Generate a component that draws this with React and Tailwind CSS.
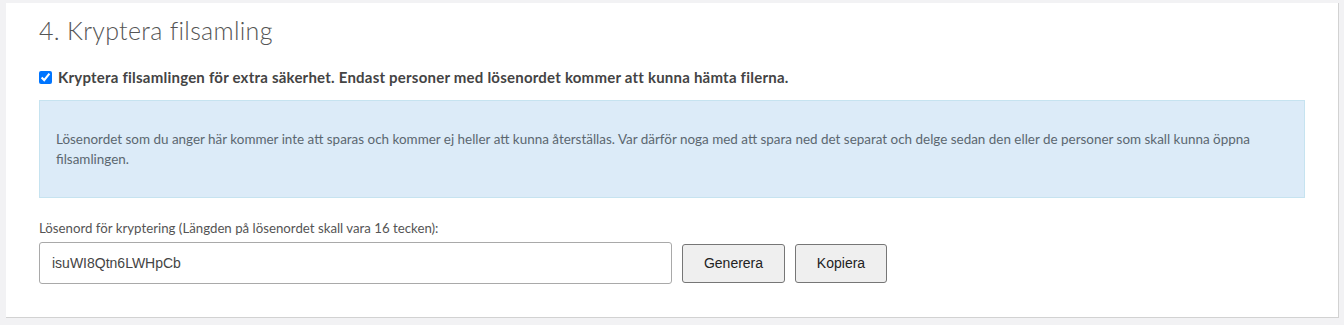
import React, { useState } from 'react';

const InfoBox = () => (
  <div className="mt-[11px] mr-[33px] border border-[#c6e3f0] bg-[#dcebf8] px-[16px] pt-[28px] pb-[28px] text-[13.45px] leading-[20px] text-[#5b6770]">
    Lösenordet som du anger här kommer inte att sparas och kommer ej heller att kunna återställas. Var därför noga med att spara ned det separat och delge sedan den eller de personer som skall kunna öppna filsamlingen.
  </div>
);

const App = () => {
  const [encrypt, setEncrypt] = useState(true);
  const [password, setPassword] = useState('isuWI8Qtn6LWHpCb');

  return (
    <div className="min-h-[325px] bg-[#f2f2f4] pt-[3px] pl-[6px]" style={{ fontFamily: 'Lato, "Noto Sans", sans-serif' }}>
      <div className="h-[315px] w-[1333px] border-r border-b border-[#d2d2d2] bg-white pl-[33px] pt-[12px]">
        <h2 className="text-[25px] font-light leading-[30px] tracking-[0.3px] text-[#555]">4. Kryptera filsamling</h2>

        <label className="mt-[21px] flex items-center gap-[6px] text-[15px] font-bold tracking-[0.22px] text-[#444]">
          <input
            type="checkbox"
            checked={encrypt}
            onChange={(e) => setEncrypt(e.target.checked)}
            className="h-[13px] w-[13px] accent-[#0075ff]"
          />
          Kryptera filsamlingen för extra säkerhet. Endast personer med lösenordet kommer att kunna hämta filerna.
        </label>

        <InfoBox />

        {/* password row */}
        <div className="mt-[21px] text-[13.25px] text-[#555]">
          Lösenord för kryptering (Längden på lösenordet skall vara 16 tecken):
        </div>
        <div className="mt-[4px] flex items-center gap-[10px]" style={{ fontFamily: '"Liberation Sans", Arial, sans-serif' }}>
          <input
            type="text"
            value={password}
            onChange={(e) => setPassword(e.target.value)}
            className="h-[42px] w-[633px] rounded-[3px] border border-[#a9a9a9] px-[12px] text-[14px] text-[#444] outline-none"
          />
          <button className="h-[39px] w-[103px] rounded-[3px] border border-[#767676] bg-[#efefef] text-[14px] text-[#222]">
            Generera
          </button>
          <button className="h-[39px] w-[92px] rounded-[3px] border border-[#767676] bg-[#efefef] text-[14px] text-[#222]">
            Kopiera
          </button>
        </div>
      </div>
    </div>
  );
};

export default App;
